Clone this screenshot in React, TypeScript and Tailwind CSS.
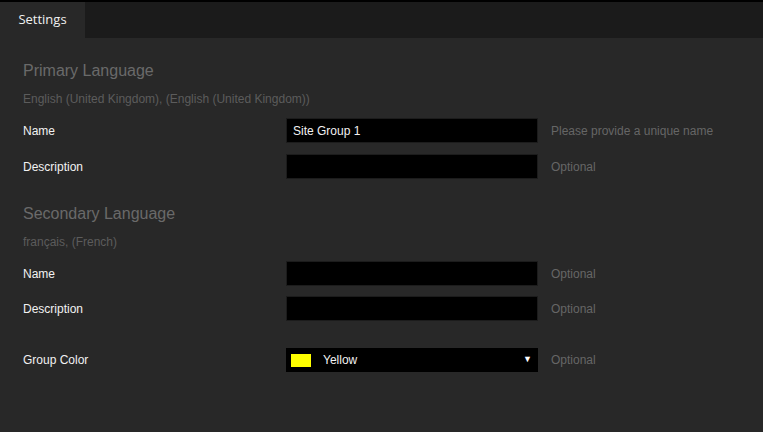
import React from "react";

const font = { fontFamily: '"Liberation Sans", Arial, sans-serif' };

function Row({
  label,
  children,
  hint,
  className = "",
}: {
  label: string;
  children: React.ReactNode;
  hint: string;
  className?: string;
}) {
  return (
    <div className={`flex items-center ${className}`}>
      <div className="w-[263px] text-[12px] text-[#f2f2f2]">{label}</div>
      {children}
      <div className="ml-[13px] text-[12px] text-[#666666]">{hint}</div>
    </div>
  );
}

function TextBox({ value = "" }: { value?: string }) {
  return (
    <input
      defaultValue={value}
      className="h-[25px] w-[252px] border border-[#1c1c1c] bg-black px-[6px] text-[12px] text-[#f2f2f2] outline-none"
      style={font}
    />
  );
}

export default function App() {
  return (
    <div className="h-[432px] w-[763px] overflow-hidden bg-black pt-[2px]" style={font}>
      <div className="flex h-[36px] bg-[#1b1b1b]">
        <div
          className="flex w-[85px] items-center justify-center bg-[#282828] text-[13px] text-[#f0f0f0]"
          style={{ fontFamily: '"Open Sans", "Noto Sans", sans-serif' }}
        >
          Settings
        </div>
      </div>
      <div className="h-[394px] bg-[#282828] pl-[23px] pt-[23px]">
        <div className="h-[20px] text-[16px] leading-[20px] text-[#6a6a6a]">Primary Language</div>
        <div className="mt-[10px] h-[16px] text-[12px] leading-[16px] text-[#5c5c5c]">
          English (United Kingdom), (English (United Kingdom))
        </div>
        <Row label="Name" hint="Please provide a unique name" className="mt-[11px]">
          <TextBox value="Site Group 1" />
        </Row>
        <Row label="Description" hint="Optional" className="mt-[11px]">
          <TextBox />
        </Row>

        <div className="mt-[25px] h-[20px] text-[16px] leading-[20px] text-[#6a6a6a]">Secondary Language</div>
        <div className="mt-[10px] h-[16px] text-[12px] leading-[16px] text-[#5c5c5c]">français, (French)</div>
        <Row label="Name" hint="Optional" className="mt-[11px]">
          <TextBox />
        </Row>
        <Row label="Description" hint="Optional" className="mt-[10px]">
          <TextBox />
        </Row>

        <Row label="Group Color" hint="Optional" className="mt-[27px]">
          <div className="flex h-[24px] w-[252px] items-center bg-black pl-[5px] pr-[6px] text-[12px] text-[#f2f2f2]">
            <span className="h-[13px] w-[20px] bg-[#ffff00]" />
            <span className="ml-[12px] flex-1">Yellow</span>
            <span className="text-[9px] text-white">▼</span>
          </div>
        </Row>
      </div>
    </div>
  );
}
